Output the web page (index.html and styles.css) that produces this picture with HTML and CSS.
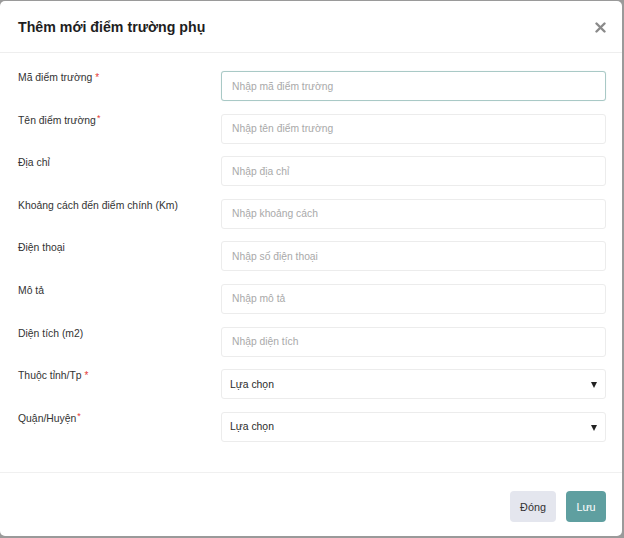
FILE: index.html
```html
<!DOCTYPE html>
<html lang="vi">
<head>
<meta charset="utf-8">
<link rel="stylesheet" href="styles.css">
</head>
<body>
<div class="modal">
  <div class="modal-header">
    <h1 class="title">Thêm mới điểm trường phụ</h1>
    <span class="close"><svg width="11" height="11" viewBox="0 0 11 11"><path d="M1.5 1.5L9.5 9.5M9.5 1.5L1.5 9.5" stroke="#8a8a8a" stroke-width="2.4" stroke-linecap="round"/></svg></span>
  </div>
  <div class="modal-body">
    <div class="row"><label class="label">Mã điểm trường <span class="req">*</span></label><input class="field focus" placeholder="Nhập mã điểm trường"></div>
    <div class="row"><label class="label">Tên điểm trường<span class="req up">*</span></label><input class="field" placeholder="Nhập tên điểm trường"></div>
    <div class="row"><label class="label">Địa chỉ</label><input class="field" placeholder="Nhập địa chỉ"></div>
    <div class="row"><label class="label">Khoảng cách đến điểm chính (Km)</label><input class="field" placeholder="Nhập khoảng cách"></div>
    <div class="row"><label class="label">Điện thoại</label><input class="field" placeholder="Nhập số điện thoại"></div>
    <div class="row"><label class="label">Mô tả</label><input class="field" placeholder="Nhập mô tả"></div>
    <div class="row"><label class="label">Diện tích (m2)</label><input class="field" placeholder="Nhập diện tích"></div>
    <div class="row"><label class="label">Thuộc tỉnh/Tp <span class="req">*</span></label><div class="field select"><span>Lựa chọn</span><span class="arrow"></span></div></div>
    <div class="row"><label class="label">Quận/Huyện<span class="req up">*</span></label><div class="field select"><span>Lựa chọn</span><span class="arrow"></span></div></div>
  </div>
  <div class="modal-footer">
    <button class="btn btn-close">Đóng</button>
    <button class="btn btn-save">Lưu</button>
  </div>
</div>
</body>
</html>
```
FILE: styles.css
```css
html, body { margin: 0; padding: 0; }
body {
  background: #9a9a9a;
  font-family: "Liberation Sans", Arial, sans-serif;
  width: 624px;
  height: 538px;
  overflow: hidden;
}
.modal {
  margin-top: 1px;
  width: 622px;
  height: 535px;
  background: #fff;
  border-radius: 5px;
  display: flex;
  flex-direction: column;
}
.modal-header {
  height: 51px;
  border-bottom: 1px solid #eeeeee;
  display: flex;
  align-items: center;
  justify-content: space-between;
  padding: 0 16px 0 18px;
  flex-shrink: 0;
}
.title {
  margin: 0;
  font-size: 14.2px;
  font-weight: bold;
  color: #1e1e1e;
  padding-top: 1px;
}
.close { display: flex; padding-top: 1px; }
.modal-body {
  padding: 18px 16px 0 18px;
  height: 420px;
  border-bottom: 1px solid #f0f0f0;
  box-sizing: border-box;
  flex-shrink: 0;
}
.row {
  display: flex;
  height: 30px;
  margin-bottom: 12.6px;
}
.label {
  width: 203px;
  font-size: 10.4px;
  color: #333;
  line-height: 14px;
  padding-top: 0;
}
.req { color: #e53935; font-size: 10px; }
.req.up { position: relative; top: -3px; font-size: 9px; margin-left: 1px; }
.field {
  width: 385px;
  height: 30px;
  box-sizing: border-box;
  border: 1px solid #ececec;
  border-radius: 3px;
  padding: 0 10px;
  font-family: "Liberation Sans", Arial, sans-serif;
  font-size: 10.3px;
  color: #333;
  outline: none;
  background: #fff;
}
.field::placeholder { color: #a9a9a9; }
.field.focus { border-color: #a9c9c6; box-shadow: 0 0 1px #cfe0de; }
.select {
  display: flex;
  align-items: center;
  justify-content: space-between;
  padding: 0 8px 0 8px;
  font-size: 10.4px;
  color: #2b2b2b;
}
.arrow {
  width: 0; height: 0;
  border-left: 3.5px solid transparent;
  border-right: 3.5px solid transparent;
  border-top: 6px solid #222;
  margin-top: 2px;
}
.modal-footer {
  display: flex;
  justify-content: flex-end;
  gap: 10px;
  padding: 18px 16px 0 0;
}
.btn {
  height: 31px;
  border: none;
  border-radius: 4px;
  font-family: "Liberation Sans", Arial, sans-serif;
  font-size: 10.8px;
  padding: 0;
}
.btn-close { width: 46px; background: #e4e6ee; color: #333; }
.btn-save { width: 40px; background: #5f9fa0; color: #fff; }
```
